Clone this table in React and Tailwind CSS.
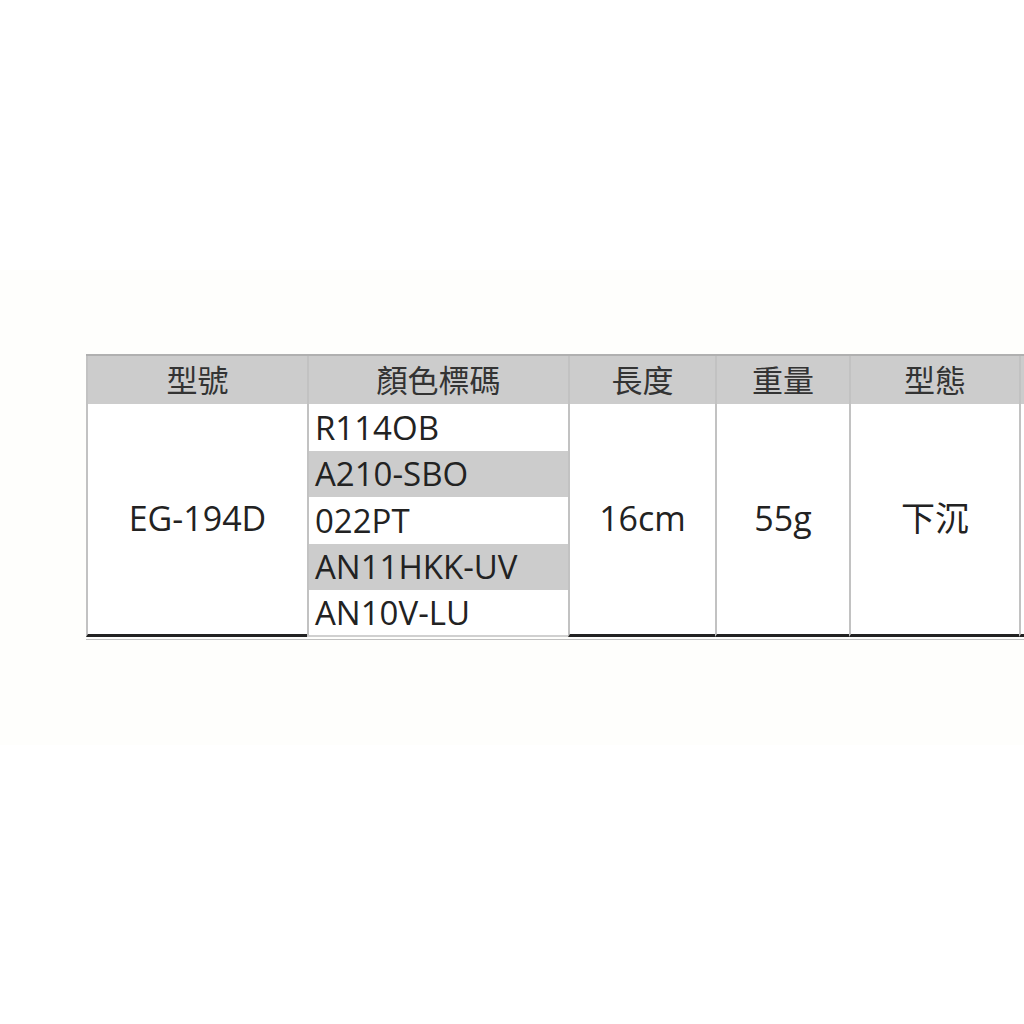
export default function App() {
  const font = { fontFamily: '"Open Sans","Noto Sans CJK TC",sans-serif' };
  const codes = ["R114OB", "A210-SBO", "022PT", "AN11HKK-UV", "AN10V-LU"];
  const head = "flex items-center justify-center bg-[#cccccc] text-[#333333] text-[31px] border-l-2 border-[#c2c2c2] h-[48px]";
  const bigCell = "row-span-5 flex items-center justify-center text-[34px] text-[#222222] border-l-2 border-[#c2c2c2] border-b-[3px] border-b-[#222222]";
  return (
    <div className="w-[1024px] h-[1024px] bg-white overflow-hidden" style={font}>
      <div className="mt-[270px] h-[475px] bg-[#fefefc] pt-[84px] pl-[86px] overflow-hidden">
        <div className="w-[1100px] border-t-2 border-[#b0b0b0] border-b border-b-[#c0c0c0] pb-[2px]">
          <div className="grid grid-cols-[221px_261px_147px_134px_170px_167px] grid-rows-[48px_repeat(5,46.6px)]">
            <div className={head}>型號</div>
            <div className={head}>顏色標碼</div>
            <div className={head}>長度</div>
            <div className={head}>重量</div>
            <div className={head}>型態</div>
            <div className={head}></div>

            <div className={bigCell + " row-start-2 col-start-1 bg-white"}>EG-194D</div>
            {codes.map((c, i) => (
              <div
                key={c}
                className={
                  "col-start-2 flex items-center pl-[6px] text-[33px] text-[#222222] border-l-2 border-[#c2c2c2] " +
                  (i % 2 === 1 ? "bg-[#cccccc]" : "bg-white") +
                  (i === 4 ? " border-b-2 border-b-[#d0d0d0]" : "")
                }
                style={{ gridRowStart: i + 2 }}
              >
                {c}
              </div>
            ))}
            <div className={bigCell + " row-start-2 col-start-3 bg-white"}>16cm</div>
            <div className={bigCell + " row-start-2 col-start-4 bg-white"}>55g</div>
            <div className={bigCell + " row-start-2 col-start-5 bg-white"}>下沉</div>
            <div className={bigCell + " row-start-2 col-start-6 bg-white"}></div>
          </div>
        </div>
      </div>
    </div>
  );
}
